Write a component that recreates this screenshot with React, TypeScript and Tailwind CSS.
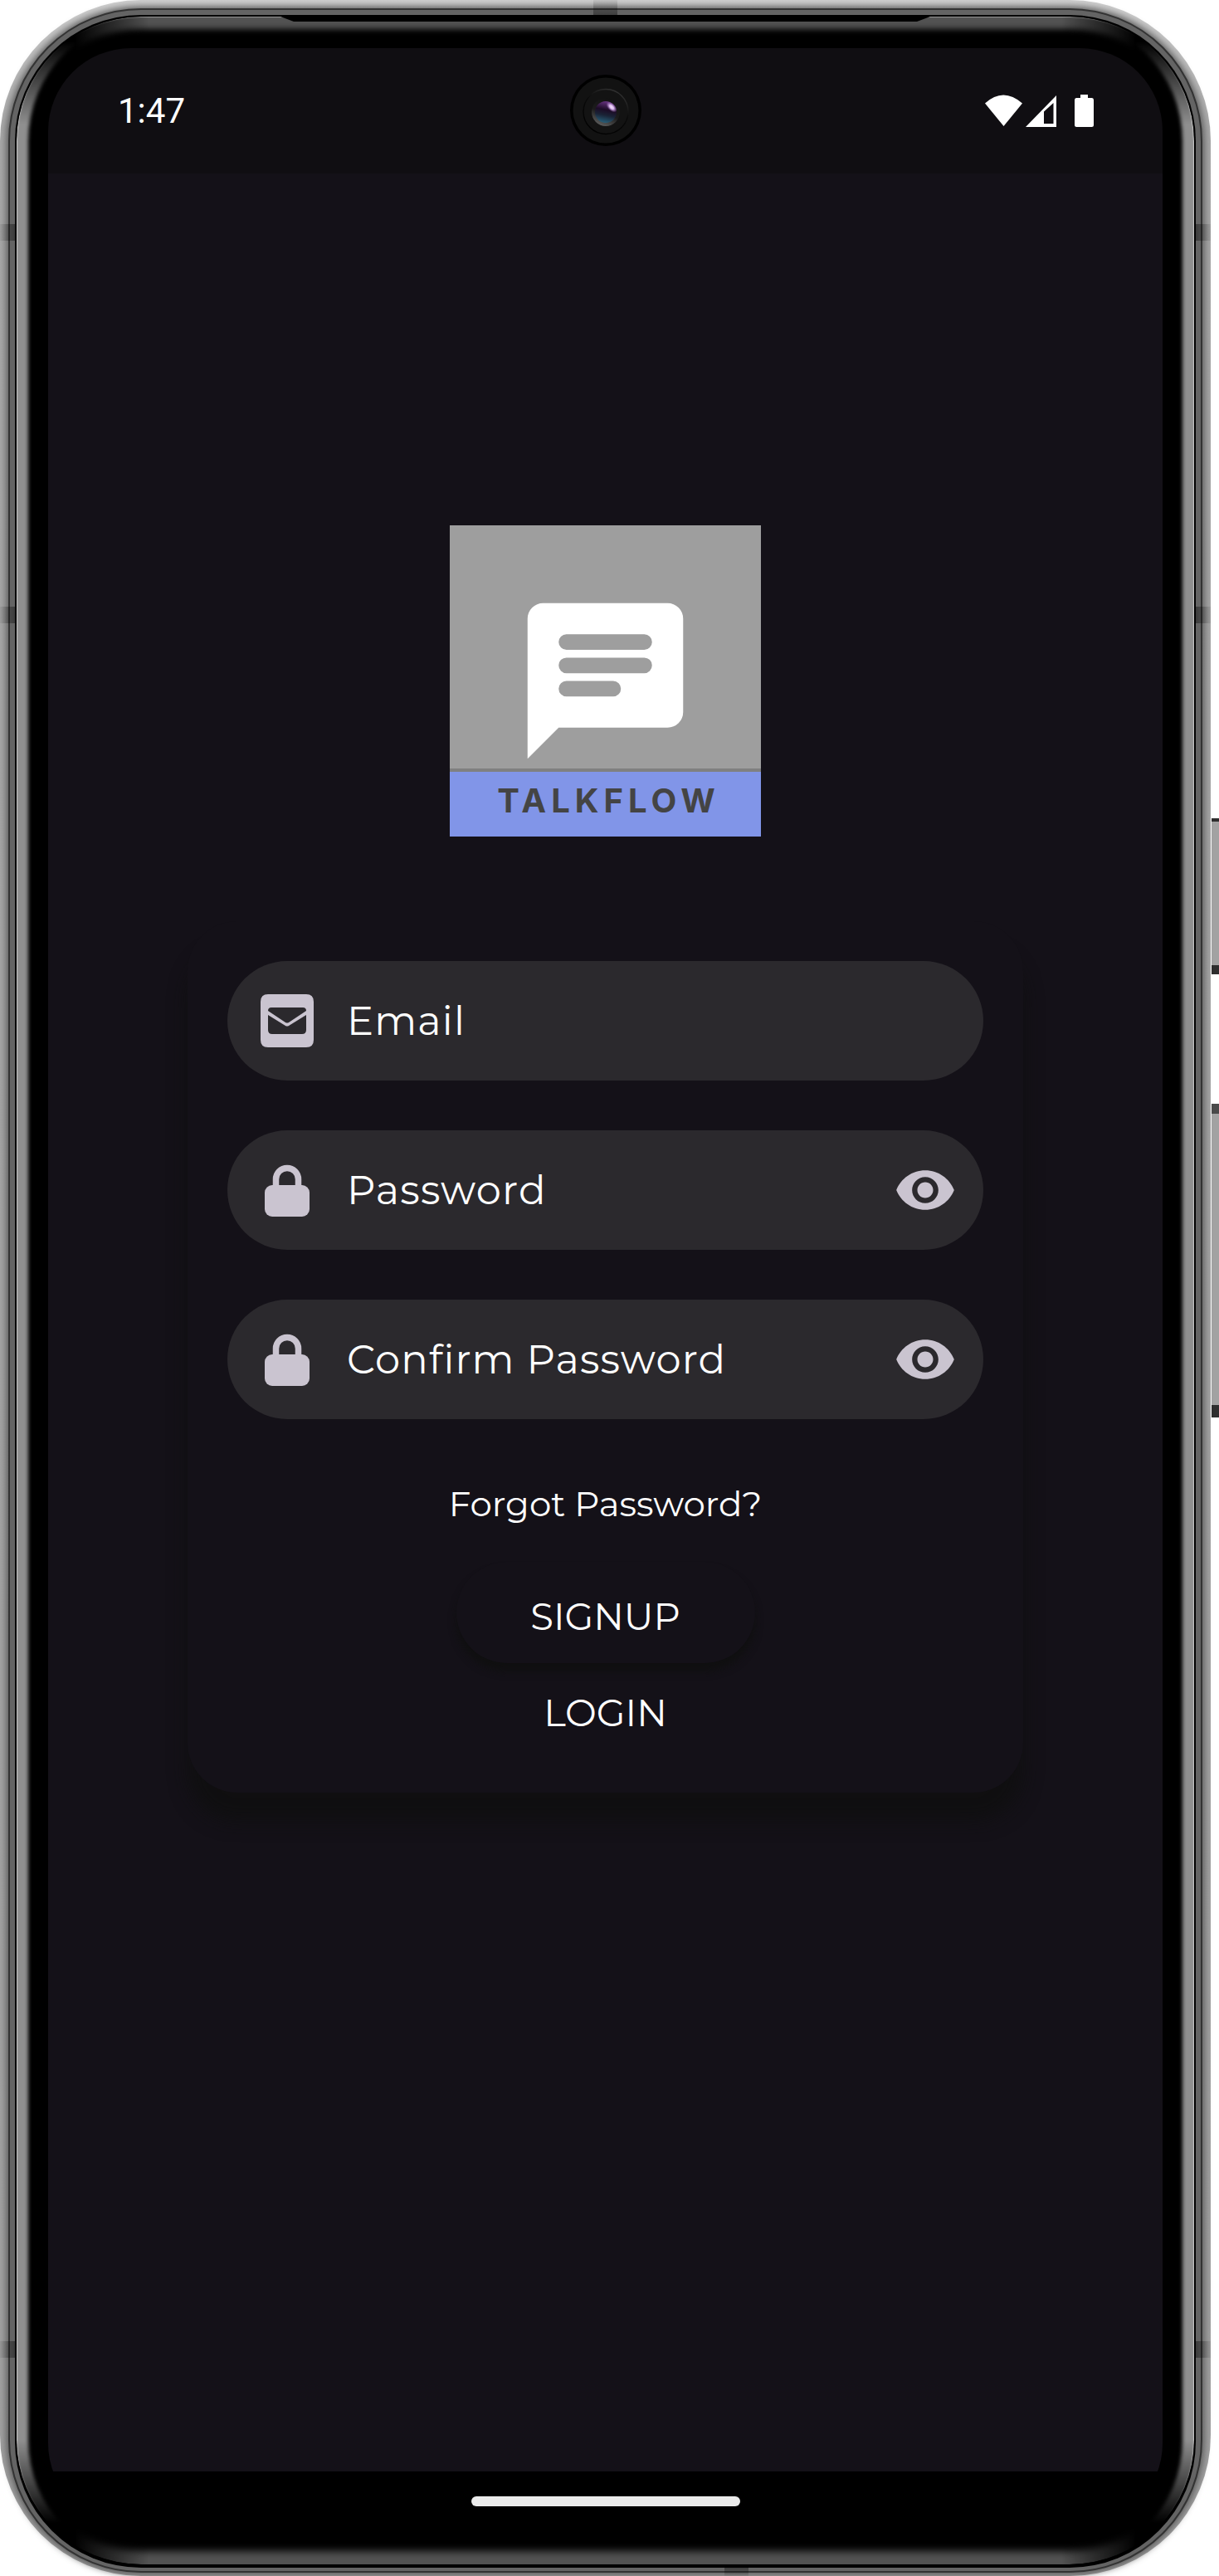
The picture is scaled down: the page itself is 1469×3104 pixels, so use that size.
import { useState } from "react";
import type { ReactNode } from "react";

function MailIcon() {
  return (
    <svg viewBox="0 0 64 64" className="size-16" aria-hidden="true">
      <path
        fill="#cac4d0"
        fillRule="evenodd"
        d="M9 0H55Q64 0 64 9V55Q64 64 55 64H9Q0 64 0 55V9Q0 0 9 0ZM13 16Q9 16 9 20L30 34Q32 35 34 34L55 20Q55 16 51 16ZM9 25V43Q9 48 14 48H50Q55 48 55 43V25L34 38Q32 39 30 38Z"
      />
    </svg>
  );
}

function LockIcon() {
  return (
    <svg viewBox="0 0 64 64" className="size-16" aria-hidden="true">
      <path d="M18.500 28V19a13.500 13.500 0 0 1 27 0V28" fill="none" stroke="#cac4d0" strokeWidth="7.500" />
      <rect x="5" y="26" width="54" height="38" rx="9" fill="#cac4d0" />
    </svg>
  );
}

function EyeIcon() {
  return (
    <svg viewBox="0 0 24 24" className="size-[76px]" aria-hidden="true">
      <path
        fill="#cac4d0"
        d="M12 4.500C7 4.500 2.730 7.610 1 12c1.730 4.390 6 7.500 11 7.500s9.270-3.110 11-7.500c-1.730-4.390-6-7.500-11-7.500zM12 17c-2.760 0-5-2.240-5-5s2.240-5 5-5 5 2.240 5 5-2.240 5-5 5zm0-8c-1.660 0-3 1.340-3 3s1.340 3 3 3 3-1.340 3-3-1.340-3-3-3z"
      />
    </svg>
  );
}

function Field({
  id,
  label,
  type,
  icon,
  reveal,
}: {
  id: string;
  label: string;
  type: string;
  icon: ReactNode;
  reveal?: boolean;
}) {
  const [shown, setShown] = useState(false);
  return (
    <div className="flex h-36 items-center rounded-full bg-[#2b292d] pl-10 pr-8">
      <label htmlFor={id} aria-label={label}>
        {icon}
      </label>
      <input
        id={id}
        type={shown ? "text" : type}
        placeholder={label}
        className="ml-10 h-full min-w-0 flex-1 bg-transparent text-5xl tracking-wide text-white outline-none placeholder:text-white"
      />
      {reveal && (
        <button type="button" aria-label={`Show ${label}`} onClick={() => setShown(!shown)}>
          <EyeIcon />
        </button>
      )}
    </div>
  );
}

function Logo() {
  return (
    <div className="flex size-[375px] flex-col bg-[#9e9e9e]">
      <div className="flex min-h-0 flex-1 justify-center pt-[75px]">
        <svg viewBox="0 0 24 24" className="size-[225px]" aria-hidden="true">
          <path
            fill="#fff"
            fillRule="evenodd"
            d="M4 2H20a2 2 0 0 1 2 2V16a2 2 0 0 1-2 2H6L2 22V4a2 2 0 0 1 2-2ZM7 6a1 1 0 0 0 0 2H17a1 1 0 0 0 0-2ZM7 9a1 1 0 0 0 0 2H17a1 1 0 0 0 0-2ZM7 12a1 1 0 0 0 0 2H13a1 1 0 0 0 0-2Z"
          />
        </svg>
      </div>
      <div className="flex h-[82px] shrink-0 items-center justify-center border-t-4 border-[#808080] bg-[#8195e8] pb-2 pl-2 font-[Inter] text-[40px] leading-none font-bold tracking-[6px] text-[#444]">
        TALKFLOW
      </div>
    </div>
  );
}

function StatusBar() {
  return (
    <header className="relative flex h-[151px] items-center justify-between bg-[#100e12] pl-[84px] pr-[83px]">
      <time className="font-[Roboto] text-[42px] leading-none text-white">1:47</time>
      <svg viewBox="0 0 131 39" className="h-[39px] w-[131px]" fill="#fff" aria-label="Wi-Fi, signal, battery">
        <path d="M0 10.500Q22 -9.500 45 10.500L22.500 38Z" />
        <path fillRule="evenodd" d="M49 39L86 1V39ZM71 20.500V35H82.500V10Z" />
        <path d="M115 0H124V4H129Q131 4 131 6.500V36.500Q131 39 128.500 39H110.500Q108 39 108 36.500V6.500Q108 4 110 4H115Z" />
      </svg>
      <svg viewBox="0 0 86 86" className="absolute left-1/2 top-8 -ml-[43px] size-[86px]" aria-hidden="true">
        <defs>
          <linearGradient id="barrel" x1="0.300" y1="1" x2="0.700" y2="0">
            <stop offset="0" stopColor="#606060" />
            <stop offset="0.450" stopColor="#1c1c1c" />
            <stop offset="1" stopColor="#111" />
          </linearGradient>
          <linearGradient id="rim" x1="0.200" y1="1" x2="0.700" y2="0">
            <stop offset="0" stopColor="#000" />
            <stop offset="0.600" stopColor="#0a0a0a" />
            <stop offset="1" stopColor="#333" />
          </linearGradient>
          <linearGradient id="lens" x1="0.400" y1="1" x2="0.600" y2="0">
            <stop offset="0" stopColor="#28607a" />
            <stop offset="0.350" stopColor="#1a2336" />
            <stop offset="0.600" stopColor="#1c0c26" />
            <stop offset="1" stopColor="#6a3484" />
          </linearGradient>
          <radialGradient id="glint">
            <stop offset="0" stopColor="#f4e2fc" />
            <stop offset="0.400" stopColor="#d8b8ea" />
            <stop offset="1" stopColor="#a070c0" stopOpacity="0" />
          </radialGradient>
        </defs>
        <circle cx="43" cy="43" r="43" fill="#000" />
        <circle cx="43" cy="43" r="39.500" fill="#121212" />
        <circle cx="43" cy="44.500" r="27" fill="#131313" stroke="url(#rim)" strokeWidth="1.500" />
        <circle cx="43" cy="45" r="17" fill="url(#barrel)" />
        <circle cx="43" cy="45" r="13" fill="url(#lens)" />
        <ellipse cx="50" cy="39" rx="8" ry="4.500" transform="rotate(45 50 39)" fill="url(#glint)" />
      </svg>
    </header>
  );
}

function SignupForm() {
  return (
    <form
      onSubmit={(e) => e.preventDefault()}
      className="mx-auto mt-[102px] flex w-3/4 flex-col items-center rounded-[60px] bg-[#141118] px-12 py-12 shadow-[0_34px_22px_rgba(15,15,15,0.800)]"
    >
      <div className="flex w-full flex-col gap-[60px]">
        <Field id="email" label="Email" type="email" icon={<MailIcon />} />
        <Field id="password" label="Password" type="password" icon={<LockIcon />} reveal />
        <Field id="confirm" label="Confirm Password" type="password" icon={<LockIcon />} reveal />
      </div>
      <a href="#forgot" className="mt-[76px] text-[42px] leading-[52px]">
        Forgot Password?
      </a>
      <button
        type="submit"
        className="mt-[44px] h-[122px] w-[360px] rounded-full bg-[#141118] pt-2 text-[45px] leading-none shadow-[0_10px_10px_rgba(15,15,15,0.900)]"
      >
        SIGNUP
      </button>
      <button type="button" className="mt-[10px] h-[98px] px-12 text-[45px] leading-none">
        LOGIN
      </button>
    </form>
  );
}

function Band({ className }: { className: string }) {
  return <div aria-hidden="true" className={`absolute from-black/5 to-black/40 ${className}`} />;
}

export default function App() {
  return (
    <div className="relative flex min-h-screen flex-col bg-white pr-[10px] font-['Montserrat','Inter',sans-serif] text-white">
      <div
        aria-hidden="true"
        className="absolute right-0 top-[986px] h-[188px] w-[9px] border-b-[11px] border-t-[4px] border-[#2e2e2e] bg-[#a2a2a2]"
      />
      <div
        aria-hidden="true"
        className="absolute right-0 top-[1330px] h-[378px] w-[9px] border-b-[15px] border-t-[12px] border-b-[#2e2e2e] border-t-[#4a4a4a] bg-[#a2a2a2]"
      />
      <div className="relative flex flex-1 flex-col rounded-[170px] bg-linear-to-b from-[#d0d0d0] via-[#a8a8a8] via-5% to-[#a0a0a0] px-[20px] pb-[14px] pt-[20px]">
        <div
          aria-hidden="true"
          className="absolute inset-x-[10px] bottom-[4px] top-[10px] rounded-[160px] border-2 border-[#333] bg-[#646464] shadow-[0_0_8px_2px_#555]"
        />
        <div
          aria-hidden="true"
          className="absolute inset-x-[18px] bottom-[10px] top-[18px] rounded-[152px] bg-black"
        />
        <Band className="left-[715px] top-0 h-5 w-[29px] bg-linear-to-b" />
        <Band className="bottom-0 left-[873px] h-[10px] w-[29px] bg-linear-to-t" />
        <Band className="left-0 top-[270px] h-5 w-[18px] bg-linear-to-r" />
        <Band className="left-0 top-[731px] h-5 w-[18px] bg-linear-to-r" />
        <Band className="bottom-[263px] left-0 h-5 w-[18px] bg-linear-to-r" />
        <Band className="right-0 top-[270px] h-5 w-[18px] bg-linear-to-l" />
        <Band className="right-0 top-[731px] h-5 w-[18px] bg-linear-to-l" />
        <Band className="bottom-[263px] right-0 h-5 w-[18px] bg-linear-to-l" />

        <div className="relative flex flex-1 flex-col rounded-[150px] bg-black px-[38px] pb-[46px] pt-[38px]">
          <div
            aria-hidden="true"
            className="absolute inset-0 rounded-[150px] mask-[linear-gradient(to_bottom,transparent_30px,black_130px,black_calc(100%-150px),transparent_calc(100%-50px))] shadow-[inset_1px_0_1px_#c8c8c8,inset_-1px_0_1px_#c8c8c8,inset_14px_0_4px_#8f8f8f,inset_-14px_0_4px_#8f8f8f]"
          />
          <div
            aria-hidden="true"
            className="absolute inset-0 rounded-[150px] mask-[linear-gradient(to_right,transparent_70px,black_160px,black_calc(100%-160px),transparent_calc(100%-70px))] shadow-[inset_0_1px_1px_#999,inset_0_15px_7px_#525252,inset_0_-16px_10px_#525252]"
          />
          <div
            aria-hidden="true"
            className="absolute left-[318px] right-[318px] top-0 h-[6px] bg-black [clip-path:polygon(0_0,100%_0,calc(100%-16px)_100%,16px_100%)]"
          />
          <div className="relative flex flex-1 flex-col overflow-hidden rounded-[100px] bg-black">
            <StatusBar />
            <main className="flex flex-1 flex-col items-center bg-[#141118] pt-[424px]">
              <Logo />
              <SignupForm />
            </main>
            <nav className="flex h-[66px] items-center justify-center bg-black" aria-label="Gesture navigation">
              <button type="button" aria-label="Home" className="mt-[6px] h-3 w-[324px] rounded-full bg-[#ebebeb]" />
            </nav>
          </div>
        </div>
      </div>
    </div>
  );
}
